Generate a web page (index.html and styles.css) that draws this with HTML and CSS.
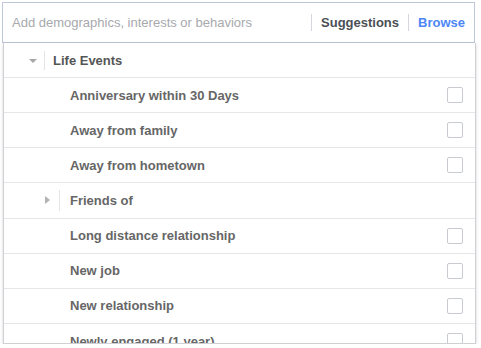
FILE: index.html
```html
<!DOCTYPE html>
<html lang="en">

<head>
    <meta charset="UTF-8">
    <meta name="viewport" content="width=device-width, initial-scale=1.0">
    <title>Detailed Targeting</title>
    <link rel="stylesheet" href="styles.css">
</head>

<body>
    <div class="search">
        <span class="placeholder">Add demographics, interests or behaviors</span>
        <span class="sep"></span>
        <span class="tab">Suggestions</span>
        <span class="sep"></span>
        <span class="tab active">Browse</span>
    </div>

    <div class="panel">
        <span class="notch"></span>

        <div class="row head">
            <span class="caret-down"></span>
            <span class="bar"></span>
            <span class="label">Life Events</span>
        </div>

        <div class="row item">
            <span class="label">Anniversary within 30 Days</span>
            <span class="check"></span>
        </div>

        <div class="row item">
            <span class="label">Away from family</span>
            <span class="check"></span>
        </div>

        <div class="row item">
            <span class="label">Away from hometown</span>
            <span class="check"></span>
        </div>

        <div class="row group">
            <span class="caret-right"></span>
            <span class="bar"></span>
            <span class="label">Friends of</span>
        </div>

        <div class="row item">
            <span class="label">Long distance relationship</span>
            <span class="check"></span>
        </div>

        <div class="row item">
            <span class="label">New job</span>
            <span class="check"></span>
        </div>

        <div class="row item">
            <span class="label">New relationship</span>
            <span class="check"></span>
        </div>

        <div class="row item">
            <span class="label">Newly engaged (1 year)</span>
            <span class="check"></span>
        </div>
    </div>
</body>

</html>
```

FILE: styles.css
```css
body {
    margin: 0;
    padding: 2px 0 0 2px;
    background: #fff;
    font-family: "Liberation Sans", Arial, Helvetica, sans-serif;
    font-size: 13px;
}

.search {
    box-sizing: border-box;
    width: 473px;
    height: 41px;
    border: 1px solid #bdc7d8;
    display: flex;
    align-items: center;
    padding: 0 9px 0 9px;
}

.placeholder {
    color: #a7a9ad;
    flex: 1;
}

.sep {
    width: 1px;
    height: 17px;
    background: #d3d6db;
    margin: 0 9px;
}

.tab {
    font-weight: bold;
    color: #4b4f56;
}

.tab.active {
    color: #4c87f5;
}

.panel {
    position: relative;
    margin-left: 1px;
    width: 471px;
    height: 300px;
    border: 1px solid #cfd1d5;
    border-top: none;
    box-shadow: 0 1px 3px rgba(0, 0, 0, 0.18);
    background: #fff;
    overflow: hidden;
}

/* little pointer under Browse */
.notch {
    position: absolute;
    top: -5px;
    left: 429px;
    width: 7px;
    height: 7px;
    background: #fff;
    border-left: 1px solid #bdc7d8;
    border-top: 1px solid #bdc7d8;
    transform: rotate(45deg);
}

.row {
    height: 34.15px;
    border-bottom: 1px solid #e5e6e9;
    display: flex;
    align-items: center;
    font-weight: bold;
    color: #666;
}

.head {
    height: 34px;
    padding-left: 25px;
    color: #555;
}

.caret-down {
    width: 0;
    height: 0;
    border-left: 4px solid transparent;
    border-right: 4px solid transparent;
    border-top: 4px solid #a6a6a6;
    margin-top: 1px;
}

.bar {
    width: 1px;
    height: 19px;
    background: #e3e4e7;
}

.head .bar {
    margin: 0 8px 0 7px;
}

.group {
    padding-left: 41px;
}

.caret-right {
    width: 0;
    height: 0;
    border-top: 4px solid transparent;
    border-bottom: 4px solid transparent;
    border-left: 5px solid #b3b3b3;
}

.group .bar {
    height: 21px;
    margin: 0 10px 0 9px;
}

.item {
    padding-left: 66px;
    padding-right: 12px;
}

.item .label {
    flex: 1;
}

.check {
    width: 14px;
    height: 14px;
    border: 1px solid #c8cbd0;
    border-radius: 2px;
}
```
